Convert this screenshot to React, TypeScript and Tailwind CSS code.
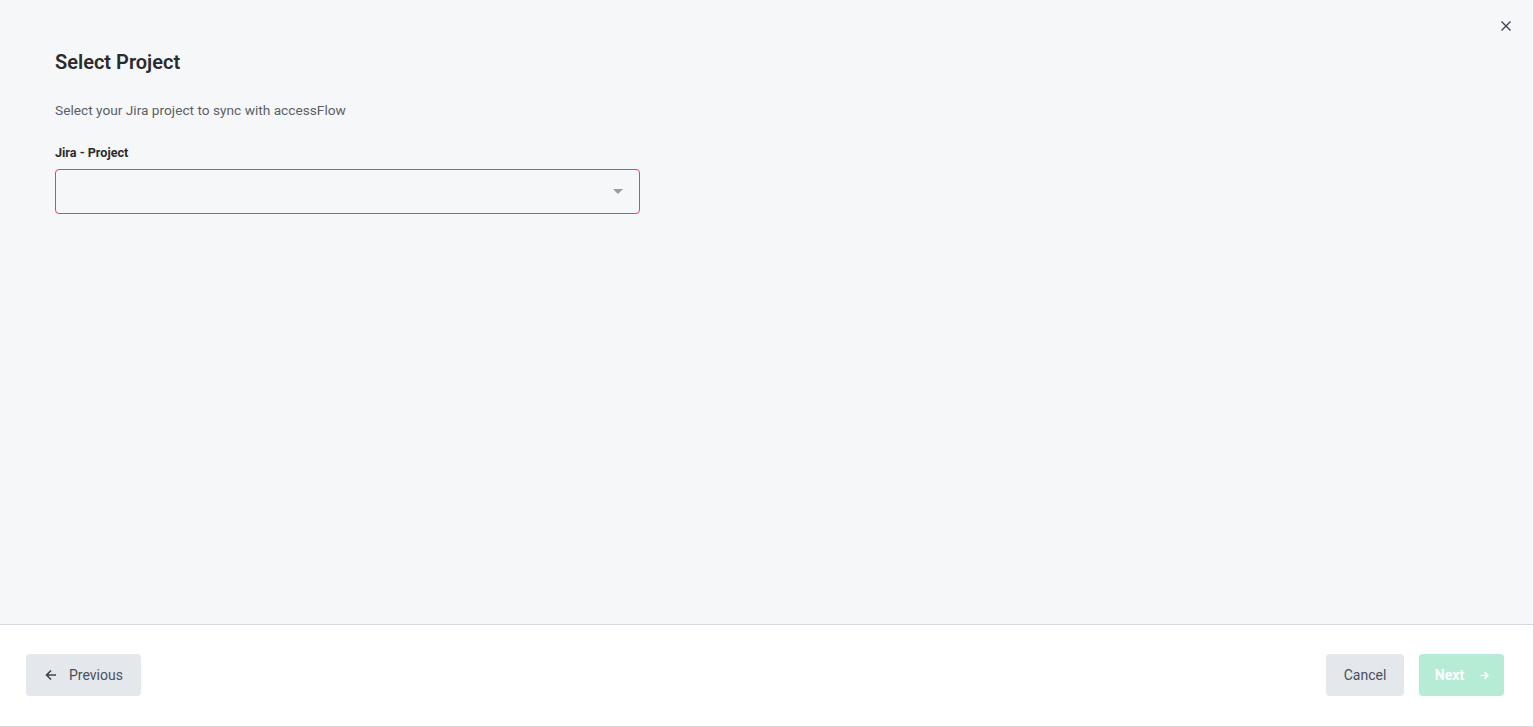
import React from "react";

export default function App() {
  return (
    <div className="w-[1534px] h-[727px] flex flex-col border-r border-b border-[#d4d7dc] bg-white" style={{ fontFamily: "Roboto, 'Liberation Sans', sans-serif" }}>
      <div className="relative flex-1 bg-[#f6f7f9] border-b border-[#d3d8de] px-[55px] pt-[50px]">
        <button className="absolute right-[20px] top-[19px] w-[14px] h-[14px] flex items-center justify-center text-[#3b4252]">
          <svg width="12" height="12" viewBox="0 0 12 12" fill="none" stroke="currentColor" strokeWidth="1.4">
            <path d="M1.5 1.5l9 9M10.5 1.5l-9 9" />
          </svg>
        </button>
        <h1 className="text-[20px] leading-[24px] font-semibold text-[#2b2b2e]">Select Project</h1>
        <p className="mt-[26px] text-[13.7px] leading-[20px] text-[#5c5f66]">Select your Jira project to sync with accessFlow</p>
        <label className="block mt-[25px] text-[12.6px] leading-[16px] font-bold text-[#2b2b2e]">Jira - Project</label>
        <div className="mt-[8px] w-[585px] h-[45px] rounded-[4px] border border-[#e0455f] flex items-center justify-end pr-[16px]">
          <svg width="10" height="5" viewBox="0 0 10 5">
            <path d="M0 0h10L5 5z" fill="#9a9aaa" />
          </svg>
        </div>
      </div>
      <div className="h-[101px] flex items-center justify-between px-[26px] pb-[1px]">
        <button className="h-[42px] w-[115px] rounded-[4px] bg-[#e4e7ec] flex items-center pl-[18px] gap-[11px] text-[14px] text-[#4a4f5a]">
          <svg width="14" height="14" viewBox="0 0 14 14" fill="none" stroke="#3f4450" strokeWidth="1.6">
            <path d="M12 7H2.5M7 2.5L2.5 7 7 11.5" />
          </svg>
          <span>Previous</span>
        </button>
        <div className="flex items-center gap-[15px] pr-[3px]">
          <button className="h-[42px] w-[78px] rounded-[4px] bg-[#e4e7ec] text-[14px] text-[#4a4f5a]">Cancel</button>
          <button className="h-[42px] w-[85px] rounded-[4px] bg-[#b6ebd5] flex items-center justify-center gap-[15px] pl-[2px] text-[14px] font-bold text-white">
            <span>Next</span>
            <svg width="11" height="11" viewBox="0 0 14 14" fill="none" stroke="white" strokeWidth="1.8">
              <path d="M2 7h9.5M7 2.5L11.5 7 7 11.5" />
            </svg>
          </button>
        </div>
      </div>
    </div>
  );
}
